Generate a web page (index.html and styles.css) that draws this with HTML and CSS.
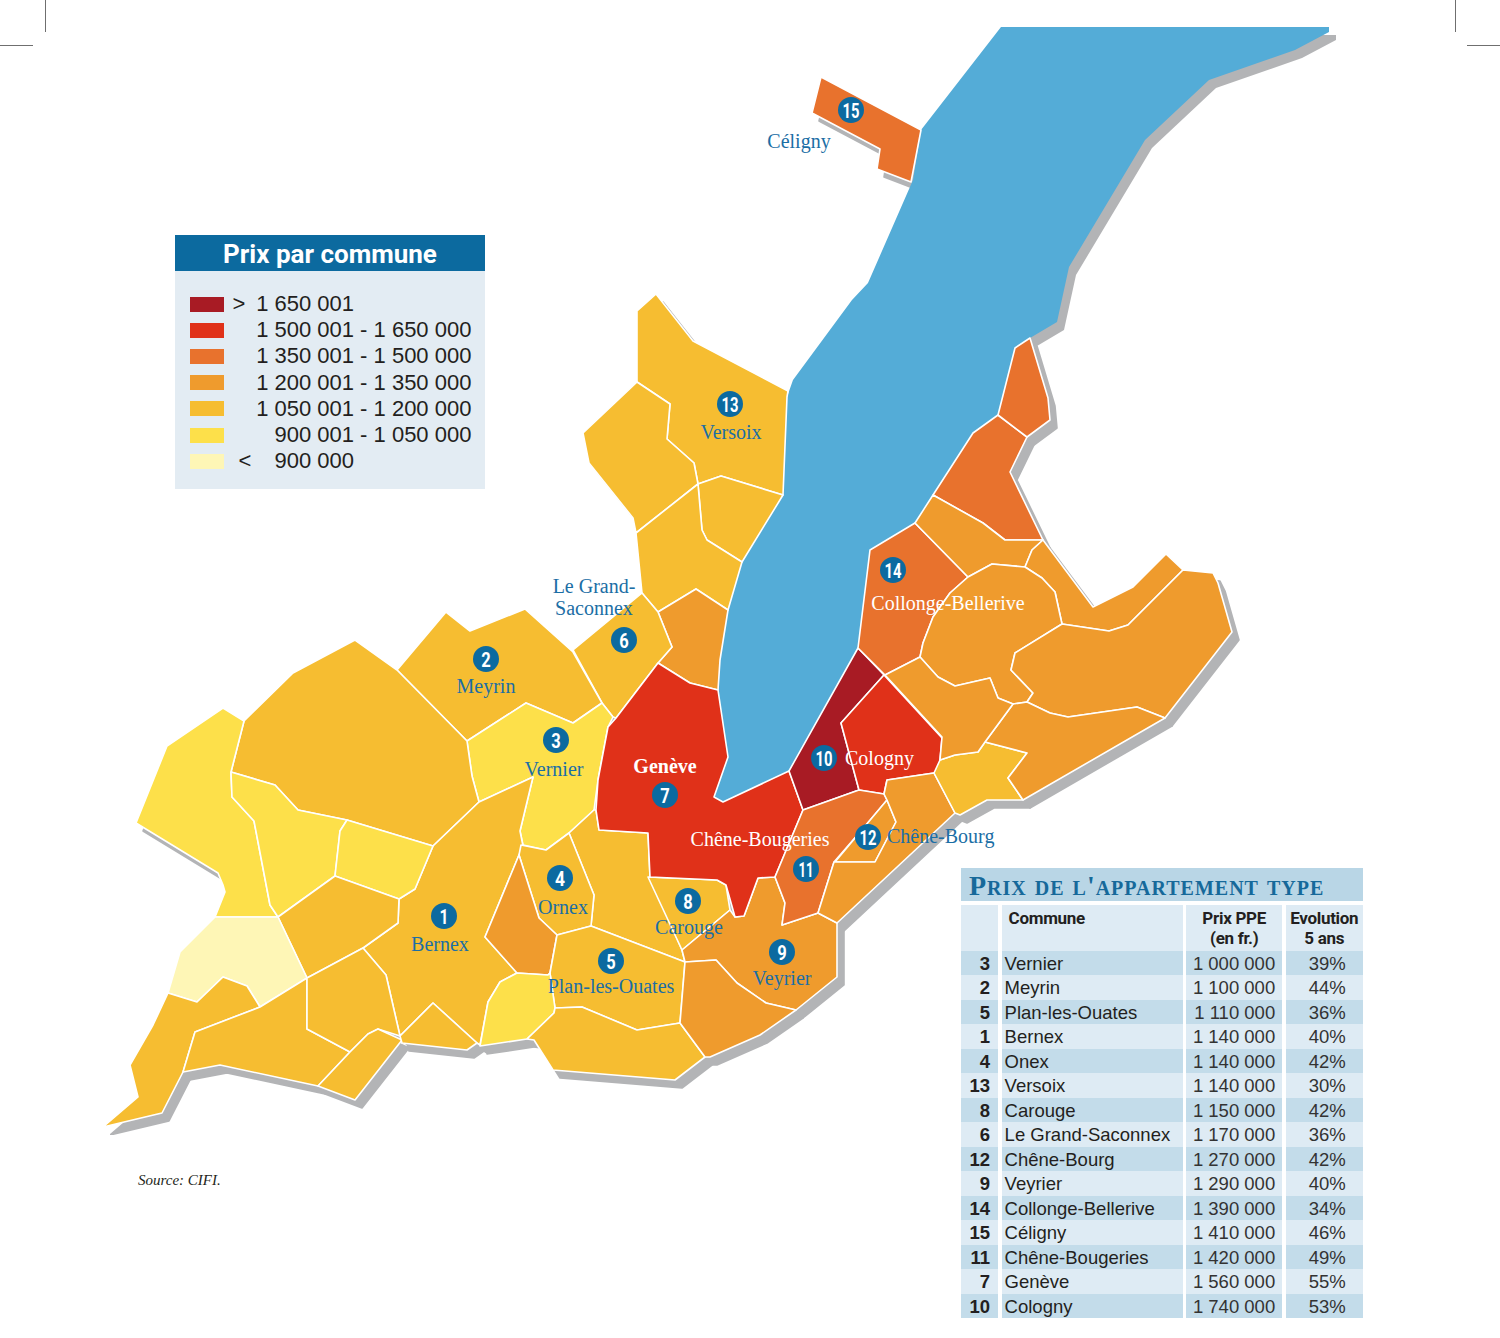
FILE: index.html
```html
<!DOCTYPE html>
<html lang="fr">
<head>
<meta charset="utf-8">
<title>Prix par commune</title>
<link rel="stylesheet" href="styles.css">
</head>
<body>
<div class="page">
  <svg class="map" width="1500" height="1338" viewBox="0 0 1500 1338" xmlns="http://www.w3.org/2000/svg">
    <defs>
      <filter id="gray" x="0" y="0" width="1" height="1">
        <feFlood flood-color="#b3b4b6"/>
        <feComposite in2="SourceAlpha" operator="in"/>
      </filter>
      <g id="land">
        <polygon class="lake" points="1001,27 1329,27 1329,32 1295,50 1209,80 1145,140 1069,267 1057,322 1030,338 1015,348 998,415 973,433 933,495 915,523 870,550 858,648 789,771 723,802 714,797 728,757 718,700 720,660 728,610 742,562 783,493 787,397 793,380 852,300 868,283 913,180 921,130"/>
        <polygon class="c3" points="821,77 921,130 911,182 877,169 880,149 812,113"/>
        <polygon class="c5" points="637,311 656,294 693,341 788,391 787,397 783,495 721,476 698,484 694,463 667,439 670,404 637,382"/>
        <polygon class="c5" points="637,382 670,404 667,439 694,463 698,484 636,533 633,518 589,463 583,433"/>
        <polygon class="c5" points="698,484 721,476 783,495 742,562 707,540 702,530"/>
        <polygon class="c5" points="636,533 698,484 702,530 707,540 742,562 728,610 696,589 658,612 642,593"/>
        <polygon class="c4" points="658,612 696,589 728,610 720,660 718,690 690,683 658,663 672,647"/>
        <polygon class="c5" points="573,650 642,593 658,612 672,647 658,663 616,718 613,717 602,703"/>
        <polygon class="c5" points="397,670 446,612 470,631 525,609 573,652 602,703 573,723 526,703 467,741"/>
        <polygon class="c6" points="467,741 526,703 573,723 602,703 613,717 608,727 598,780 594,810 569,833 546,850 523,845 520,831 533,777 479,802 472,776"/>
        <polygon class="c5" points="244,721 293,673 355,640 397,670 467,741 472,776 479,802 433,846 347,820 298,810 275,785 231,772"/>
        <polygon class="c5" points="433,846 479,802 533,777 520,831 523,846 519,855 485,937 517,973 500,982 488,1002 480,1045 477,1043 433,1003 400,1036 386,975 363,948 398,923 399,899 415,889"/>
        <polygon class="c5" points="569,833 594,810 596,810 599,830 648,833 650,877 682,950 685,962 591,926 594,895"/>
        <polygon class="c5" points="521,845 546,850 569,833 594,895 591,926 557,935 539,918 519,855"/>
        <polygon class="c4" points="519,855 539,918 557,935 550,973 548,975 517,973 485,937"/>
        <polygon class="c5" points="557,935 591,926 685,962 680,1023 637,1030 582,1007 555,1008 550,973"/>
        <polygon class="c6" points="517,973 548,975 550,973 555,1008 554,1013 527,1039 480,1046 488,1002 500,982"/>
        <polygon class="c5" points="554,1013 555,1008 582,1007 637,1030 680,1023 705,1057 675,1080 553,1070 534,1040 527,1039"/>
        <polygon class="c5" points="648,877 717,880 726,885 730,910 682,950"/>
        <polygon class="c4" points="682,950 730,910 735,917 744,916 758,878 775,877 785,903 782,925 818,913 837,923 837,977 796,1010 766,1003 737,983 716,960 685,962"/>
        <polygon class="c4" points="685,962 716,960 737,983 766,1003 796,1010 760,1035 710,1057 705,1057 680,1023"/>
        <polygon class="c2" points="616,718 658,663 690,683 718,690 728,757 714,797 723,802 789,771 803,810 785,853 775,877 758,878 744,916 735,917 726,885 717,880 650,877 648,833 599,830 596,810 598,780 608,727"/>
        <polygon class="c1" points="789,771 858,648 884,675 841,723 859,790 803,810"/>
        <polygon class="c2" points="884,675 942,738 939,770 934,773 887,780 884,794 859,790 841,723"/>
        <polygon class="c3" points="803,810 859,790 884,794 887,800 866,825 834,862 818,913 782,925 785,903 775,877 785,853"/>
        <polygon class="c4" points="887,800 896,822 875,862 835,862 866,825"/>
        <polygon class="c4" points="887,780 934,773 955,813 837,923 818,913 834,862 875,862 896,822 887,800 884,794"/>
        <polygon class="c5" points="934,773 940,760 955,755 978,752 985,742 1027,753 1008,778 1023,800 987,800 960,815 955,813"/>
        <polygon class="c3" points="870,550 915,523 968,577 950,593 933,617 923,643 920,657 885,675 858,648"/>
        <polygon class="c3" points="933,495 973,433 998,415 1027,437 1010,472 1043,540 1005,540 983,523"/>
        <polygon class="c3" points="998,415 1015,348 1030,338 1048,398 1050,420 1027,437"/>
        <polygon class="c4" points="915,523 933,495 983,523 1005,540 1043,540 1032,550 1025,567 992,564 968,577"/>
        <polygon class="c4" points="1043,540 1093,607 1133,587 1166,554 1183,570 1128,625 1109,631 1062,624 1055,592 1042,578 1025,567 1032,550"/>
        <polygon class="c4" points="968,577 992,564 1025,567 1042,578 1055,592 1062,624 1015,653 1011,670 1033,693 1027,702 1013,704 998,698 990,678 955,686 938,677 920,657 923,643 933,617 950,593"/>
        <polygon class="c4" points="1183,570 1213,573 1218,583 1232,632 1165,718 1137,707 1068,717 1050,713 1027,702 1033,693 1011,670 1015,653 1062,624 1109,631 1128,625"/>
        <polygon class="c4" points="1013,704 1027,702 1050,713 1068,717 1137,707 1165,718 1023,800 1008,778 1027,753 985,742"/>
        <polygon class="c4" points="885,675 920,657 938,677 955,686 990,678 998,698 1013,704 985,742 978,752 955,755 940,760 942,737"/>
        <polygon class="c6" points="136,823 167,746 223,708 244,721 231,772 232,797 254,821 270,905 278,917 215,917 225,892 223,885 218,873"/>
        <polygon class="c6" points="231,772 275,785 298,810 347,820 340,831 335,876 278,917 270,905 254,821 232,797"/>
        <polygon class="c6" points="347,820 433,846 415,889 399,899 335,876 340,831"/>
        <polygon class="c5" points="278,917 335,876 399,899 398,923 363,948 307,978"/>
        <polygon class="c7" points="215,917 278,917 307,978 260,1007 247,986 223,977 197,1002 168,993 180,952"/>
        <polygon class="c5" points="168,993 197,1002 223,977 247,986 260,1007 195,1032 183,1072 162,1113 103,1127 138,1097 130,1065 153,1025"/>
        <polygon class="c5" points="195,1032 260,1007 307,978 307,1029 350,1052 318,1086 220,1065 183,1072"/>
        <polygon class="c5" points="307,978 363,948 386,975 400,1036 378,1029 368,1034 350,1052 307,1029"/>
        <polygon class="c5" points="350,1052 368,1034 378,1029 402,1040 355,1100 318,1086"/>
        <polygon class="c5" points="400,1036 433,1003 477,1043 467,1050 402,1043"/>
      </g>
    </defs>
    <use href="#land" class="shadow" transform="translate(7,8)" filter="url(#gray)"/>
    <use href="#land"/>

    <g class="names">
      <text class="lbl" x="486" y="693">Meyrin</text>
      <text class="lbl" x="554" y="776">Vernier</text>
      <text class="lbl" x="563" y="914">Ornex</text>
      <text class="lbl" x="440" y="951">Bernex</text>
      <text class="lbl" x="611" y="993">Plan-les-Ouates</text>
      <text class="lbl" x="689" y="934">Carouge</text>
      <text class="lbl" x="782" y="985">Veyrier</text>
      <text class="lbl" x="594" y="593">Le Grand-</text>
      <text class="lbl" x="594" y="615">Saconnex</text>
      <text class="lbl" x="731" y="439">Versoix</text>
      <text class="lbl" x="799" y="148">Céligny</text>
      <text class="lbl lbl-w" x="948" y="610">Collonge-Bellerive</text>
      <text class="lbl lbl-w lbl-b" x="665" y="773">Genève</text>
      <text class="lbl lbl-w" x="760" y="846">Chêne-Bougeries</text>
      <text class="lbl lbl-w lbl-start" x="845" y="765">Cologny</text>
      <text class="lbl lbl-start" x="887" y="843">Chêne-Bourg</text>
    </g>

    <g class="pins">
      <circle class="pin" cx="444" cy="916" r="13"/><text class="pin-n" x="444" y="923.5" textLength="9" lengthAdjust="spacingAndGlyphs">1</text>
      <circle class="pin" cx="486" cy="659" r="13"/><text class="pin-n" x="486" y="666.5" textLength="9.5" lengthAdjust="spacingAndGlyphs">2</text>
      <circle class="pin" cx="556" cy="740" r="13"/><text class="pin-n" x="556" y="747.5" textLength="9.5" lengthAdjust="spacingAndGlyphs">3</text>
      <circle class="pin" cx="560" cy="878" r="13"/><text class="pin-n" x="560" y="885.5" textLength="10" lengthAdjust="spacingAndGlyphs">4</text>
      <circle class="pin" cx="611" cy="961" r="13"/><text class="pin-n" x="611" y="968.5" textLength="9.5" lengthAdjust="spacingAndGlyphs">5</text>
      <circle class="pin" cx="624" cy="640" r="13"/><text class="pin-n" x="624" y="647.5" textLength="9.5" lengthAdjust="spacingAndGlyphs">6</text>
      <circle class="pin" cx="665" cy="795" r="13"/><text class="pin-n" x="665" y="802.5" textLength="9.5" lengthAdjust="spacingAndGlyphs">7</text>
      <circle class="pin" cx="688" cy="901" r="13"/><text class="pin-n" x="688" y="908.5" textLength="9.5" lengthAdjust="spacingAndGlyphs">8</text>
      <circle class="pin" cx="782" cy="952" r="13"/><text class="pin-n" x="782" y="959.5" textLength="9.5" lengthAdjust="spacingAndGlyphs">9</text>
      <circle class="pin" cx="824" cy="758" r="13"/><text class="pin-n" x="824" y="765.5" textLength="17" lengthAdjust="spacingAndGlyphs">10</text>
      <circle class="pin" cx="806" cy="869" r="13"/><text class="pin-n" x="806" y="876.5" textLength="15" lengthAdjust="spacingAndGlyphs">11</text>
      <circle class="pin" cx="868" cy="837" r="13"/><text class="pin-n" x="868" y="844.5" textLength="17" lengthAdjust="spacingAndGlyphs">12</text>
      <circle class="pin" cx="730" cy="404" r="13"/><text class="pin-n" x="730" y="411.5" textLength="17" lengthAdjust="spacingAndGlyphs">13</text>
      <circle class="pin" cx="893" cy="570" r="13"/><text class="pin-n" x="893" y="577.5" textLength="17" lengthAdjust="spacingAndGlyphs">14</text>
      <circle class="pin" cx="851" cy="110" r="13"/><text class="pin-n" x="851" y="117.5" textLength="17" lengthAdjust="spacingAndGlyphs">15</text>
    </g>
  </svg>

  <div class="crop crop-v crop-l"></div>
  <div class="crop crop-h crop-hl"></div>
  <div class="crop crop-v crop-r"></div>
  <div class="crop crop-h crop-hr"></div>

  <div class="legend">
    <div class="legend-title">Prix par commune</div>
    <div class="legend-body">
      <div class="lrow"><span class="sw s1"></span><span class="sym">&gt;</span><span class="n1">1 650 001</span><span class="n2"></span></div>
      <div class="lrow"><span class="sw s2"></span><span class="sym"></span><span class="n1">1 500 001</span><span class="n2">&nbsp;- 1 650 000</span></div>
      <div class="lrow"><span class="sw s3"></span><span class="sym"></span><span class="n1">1 350 001</span><span class="n2">&nbsp;- 1 500 000</span></div>
      <div class="lrow"><span class="sw s4"></span><span class="sym"></span><span class="n1">1 200 001</span><span class="n2">&nbsp;- 1 350 000</span></div>
      <div class="lrow"><span class="sw s5"></span><span class="sym"></span><span class="n1">1 050 001</span><span class="n2">&nbsp;- 1 200 000</span></div>
      <div class="lrow"><span class="sw s6"></span><span class="sym"></span><span class="n1">900 001</span><span class="n2">&nbsp;- 1 050 000</span></div>
      <div class="lrow"><span class="sw s7"></span><span class="sym sym-lt">&lt;</span><span class="n1">900 000</span><span class="n2"></span></div>
    </div>
  </div>

  <div class="source">Source: CIFI.</div>

  <div class="table">
    <div class="t-title">Prix de l'appartement type</div>
    <div class="t-grid">
      <div class="th"></div><div class="th th-left">Commune</div><div class="th">Prix PPE<br>(en fr.)</div><div class="th">Evolution<br>5 ans</div>

      <div class="td num d">3</div><div class="td nm d">Vernier</div><div class="td pr d">1 000 000</div><div class="td pc d">39%</div>
      <div class="td num">2</div><div class="td nm">Meyrin</div><div class="td pr">1 100 000</div><div class="td pc">44%</div>
      <div class="td num d">5</div><div class="td nm d">Plan-les-Ouates</div><div class="td pr d">1 110 000</div><div class="td pc d">36%</div>
      <div class="td num">1</div><div class="td nm">Bernex</div><div class="td pr">1 140 000</div><div class="td pc">40%</div>
      <div class="td num d">4</div><div class="td nm d">Onex</div><div class="td pr d">1 140 000</div><div class="td pc d">42%</div>
      <div class="td num">13</div><div class="td nm">Versoix</div><div class="td pr">1 140 000</div><div class="td pc">30%</div>
      <div class="td num d">8</div><div class="td nm d">Carouge</div><div class="td pr d">1 150 000</div><div class="td pc d">42%</div>
      <div class="td num">6</div><div class="td nm">Le Grand-Saconnex</div><div class="td pr">1 170 000</div><div class="td pc">36%</div>
      <div class="td num d">12</div><div class="td nm d">Chêne-Bourg</div><div class="td pr d">1 270 000</div><div class="td pc d">42%</div>
      <div class="td num">9</div><div class="td nm">Veyrier</div><div class="td pr">1 290 000</div><div class="td pc">40%</div>
      <div class="td num d">14</div><div class="td nm d">Collonge-Bellerive</div><div class="td pr d">1 390 000</div><div class="td pc d">34%</div>
      <div class="td num">15</div><div class="td nm">Céligny</div><div class="td pr">1 410 000</div><div class="td pc">46%</div>
      <div class="td num d">11</div><div class="td nm d">Chêne-Bougeries</div><div class="td pr d">1 420 000</div><div class="td pc d">49%</div>
      <div class="td num">7</div><div class="td nm">Genève</div><div class="td pr">1 560 000</div><div class="td pc">55%</div>
      <div class="td num d">10</div><div class="td nm d">Cologny</div><div class="td pr d">1 740 000</div><div class="td pc d">53%</div>
    </div>
  </div>
</div>
</body>
</html>
```

FILE: styles.css
```css
html, body {
  margin: 0;
  padding: 0;
  background: #ffffff;
}

.page {
  position: relative;
  width: 1500px;
  height: 1338px;
  overflow: hidden;
  font-family: "Liberation Sans", Arial, sans-serif;
  color: #231f20;
}

.map {
  display: block;
}

/* map fills */
.lake { fill: #54acd7; }
.c1 { fill: #a81b24; }
.c2 { fill: #e03119; }
.c3 { fill: #e8722d; }
.c4 { fill: #ef9b2d; }
.c5 { fill: #f6bd31; }
.c6 { fill: #fde04a; }
.c7 { fill: #fef6b6; }

#land polygon {
  stroke: #ffffff;
  stroke-width: 1.6;
  stroke-linejoin: round;
}
#land .lake {
  stroke: none;
}

.lbl {
  font-family: "Liberation Serif", "Times New Roman", serif;
  font-size: 20px;
  fill: #1b6ea5;
  text-anchor: middle;
}
.lbl-w { fill: #ffffff; }
.lbl-b { font-weight: bold; }
.lbl-start { text-anchor: start; }

.pin { fill: #0c6aa0; }
.pin-n {
  font-family: Roboto, "Liberation Sans", sans-serif;
  font-weight: bold;
  font-size: 21px;
  fill: #ffffff;
  text-anchor: middle;
}

/* crop marks */
.crop {
  position: absolute;
  background: #6f6f6f;
}
.crop-v { top: 0; width: 1px; height: 32px; }
.crop-h { top: 45px; height: 1px; width: 33px; }
.crop-l { left: 45px; }
.crop-hl { left: 0; }
.crop-r { left: 1455px; }
.crop-hr { left: 1467px; }

/* legend */
.legend {
  position: absolute;
  left: 175px;
  top: 235px;
  width: 310px;
  background: #e3ecf3;
}
.legend-title {
  height: 36px;
  background: #0c6a9f;
  color: #ffffff;
  font-family: Roboto, "Liberation Sans", sans-serif;
  font-weight: bold;
  font-size: 26px;
  line-height: 38px;
  text-align: center;
}
.legend-body {
  padding: 20px 0 15px 15px;
  display: flex;
  flex-direction: column;
}
.lrow {
  display: flex;
  align-items: center;
  height: 26.2px;
  font-size: 22px;
  line-height: 26px;
  color: #231f20;
}
.sw {
  width: 34px;
  height: 15px;
  flex: none;
}
.s1 { background: #a81b24; }
.s2 { background: #e03119; }
.s3 { background: #e8722d; }
.s4 { background: #ef9b2d; }
.s5 { background: #f6bd31; }
.s6 { background: #fde04a; }
.s7 { background: #fef6b6; }
.sym {
  width: 30px;
  text-align: center;
  flex: none;
}
.sym-lt {
  padding-left: 12px;
  width: 18px;
}
.n1 {
  width: 100px;
  text-align: right;
  flex: none;
}
.n2 {
  white-space: pre;
}

/* source */
.source {
  position: absolute;
  left: 138px;
  top: 1172px;
  font-family: "Liberation Serif", "Times New Roman", serif;
  font-style: italic;
  font-size: 15px;
  color: #231f20;
}

/* table */
.table {
  position: absolute;
  left: 961px;
  top: 868px;
  width: 402px;
}
.t-title {
  height: 33px;
  background: #b9d6e6;
  color: #16699a;
  font-family: "Liberation Serif", "Times New Roman", serif;
  font-weight: bold;
  font-variant: small-caps;
  font-size: 28px;
  line-height: 35px;
  padding-left: 8px;
  letter-spacing: 1px;
  white-space: nowrap;
}
.t-grid {
  margin-top: 4px;
  display: grid;
  grid-template-columns: 37px 181px 96px 77px;
  column-gap: 3.6px;
  font-size: 18.5px;
}
.th {
  background: #deebf4;
  height: 46px;
  font-family: Roboto, "Liberation Sans", sans-serif;
  font-weight: bold;
  font-size: 17px;
  line-height: 20px;
  text-align: center;
  padding-top: 3px;
  box-sizing: border-box;
  letter-spacing: -0.3px;
}
.th-left {
  text-align: left;
  padding-left: 7px;
}
.td {
  height: 24.47px;
  line-height: 25px;
  background: #deebf4;
  white-space: nowrap;
}
.td.d {
  background: #c3dcea;
}
.num {
  text-align: right;
  font-weight: bold;
  padding-right: 8px;
}
.nm {
  padding-left: 3px;
}
.pr {
  text-align: right;
  padding-right: 7px;
  color: #333;
}
.pc {
  text-align: right;
  padding-right: 17px;
  color: #333;
}
```
